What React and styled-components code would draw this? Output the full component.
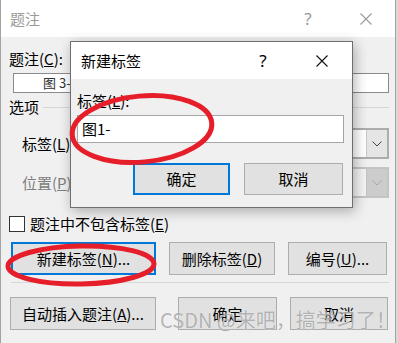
import React from "react";
import styled, { createGlobalStyle, css } from "styled-components";

const GlobalStyle = createGlobalStyle`
  html, body {
    margin: 0;
    padding: 0;
  }
  body {
    width: 398px;
    height: 343px;
    overflow: hidden;
    background: #d9d9d9;
    font-family: "Noto Sans CJK SC", "Noto Sans", sans-serif;
    color: #000;
  }
`

const Page = styled.div`
    position: relative;
    width: 398px;
    height: 343px;
    overflow: hidden;
`

// OUTER WINDOW
// ************

const Window = styled.div`
    width: 396px;
    height: 350px;
    box-sizing: border-box;
    background: #f0f0f0;
    border-left: 1px solid #a3a3a3;
    border-right: 1px solid #a3a3a3;
    display: flex;
    flex-direction: column;
`

const TitleBar = styled.div`
    height: ${p => p.$h}px;
    flex: none;
    background: #ffffff;
    display: flex;
    align-items: center;
`

const TitleText = styled.div`
    flex: 1;
    padding-left: ${p => p.$pl}px;
    font-size: 15px;
    line-height: 20px;
    color: ${p => p.$inactive ? "#9a9a9a" : "#000"};
`

const TitleControl = styled.div`
    width: ${p => p.$w}px;
    height: 100%;
    display: flex;
    align-items: center;
    justify-content: center;
    font-family: "Noto Sans", sans-serif;
    font-size: 17px;
    color: ${p => p.$inactive ? "#9a9a9a" : "#000"};
`

const CloseGlyph = ({color}) => (
    <svg width="12" height="12" viewBox="0 0 12 12">
        <path d="M0.5 0.5 L11.5 11.5 M11.5 0.5 L0.5 11.5" stroke={color} strokeWidth="1.1" fill="none"/>
    </svg>
)

const Body = styled.div`
    padding: 0 6px 0 8px;
    display: flex;
    flex-direction: column;
    font-size: 15px;
`

const FieldLabel = styled.div`
    line-height: 20px;
    height: 20px;
    margin-top: ${p => p.$mt || 0}px;
    color: ${p => p.$disabled ? "#7d7d7d" : "#000"};
`

const CaptionBox = styled.div`
    margin: 4px 0 0 4px;
    height: 20px;
    box-sizing: border-box;
    border: 1px solid #8a8a8a;
    background: #fff;
    padding-left: 29px;
    font-size: 13px;
    line-height: 18px;
    color: #333;
`

const GroupHeader = styled.div`
    margin-top: 4px;
    height: 20px;
    line-height: 20px;
    display: flex;
    align-items: center;
`

const Rule = styled.div`
    flex: 1;
    height: 1px;
    margin-left: 4px;
    background: #d7d7d7;
`

const OptionRow = styled.div`
    margin-top: ${p => p.$mt}px;
    height: 31px;
    padding-left: 13px;
    display: flex;
    align-items: center;
`

const OptionLabel = styled.div`
    width: 70px;
    line-height: 20px;
    color: ${p => p.$disabled ? "#7d7d7d" : "#000"};
`

const Combo = styled.div`
    flex: 1;
    height: 31px;
    box-sizing: border-box;
    border: 2px solid ${p => p.$disabled ? "#c4c4c4" : "#adadad"};
    background: ${p => p.$disabled ? "#f3f3f3" : "#fff"};
    display: flex;
    justify-content: flex-end;
`

const ComboButton = styled.div`
    width: 20px;
    height: 100%;
    border-left: 1px solid ${p => p.$disabled ? "#c4c4c4" : "#c9c9c9"};
    background: ${p => p.$disabled ? "#cccccc" : "#e5e5e5"};
    display: flex;
    align-items: center;
    justify-content: center;
`

const Chevron = ({color}) => (
    <svg width="10" height="6" viewBox="0 0 10 6">
        <path d="M0.5 0.5 L5 5 L9.5 0.5" stroke={color} strokeWidth="1" fill="none"/>
    </svg>
)

const CheckRow = styled.div`
    margin-top: 16px;
    height: 20px;
    display: flex;
    align-items: center;
    gap: 5px;
    line-height: 20px;
`

const CheckBox = styled.div`
    width: 16px;
    height: 16px;
    box-sizing: border-box;
    border: 1px solid #333;
    background: #fff;
`

const ButtonRow = styled.div`
    margin-top: ${p => p.$mt}px;
    padding: ${p => p.$pad || "0"};
    display: flex;
    gap: ${p => p.$gap || 13}px;
    justify-content: ${p => p.$justify || "flex-start"};
`

const Button = styled.div`
    width: ${p => p.$w}px;
    height: ${p => p.$h || 33}px;
    margin-right: ${p => p.$mr || 0}px;
    box-sizing: border-box;
    background: #e1e1e1;
    border: 1px solid #adadad;
    display: flex;
    align-items: center;
    justify-content: center;
    font-size: 15px;
    line-height: 20px;
    ${p => p.$primary && css`
        border: 2px solid #0078d7;
    `}
`

const Separator = styled.div`
    margin: 7px 0 0 2px;
    height: 1px;
    background: #d7d7d7;
`

// NEW LABEL DIALOG
// ****************

const Dialog = styled.div`
    position: absolute;
    left: 70px;
    top: 41px;
    width: 283px;
    height: 167px;
    box-sizing: border-box;
    border: 1px solid #6f6f6f;
    background: #f0f0f0;
    box-shadow: 2px 3px 12px rgba(0, 0, 0, 0.3);
    display: flex;
    flex-direction: column;
`

const DialogBody = styled.div`
    padding: 0 8px 0 6px;
    display: flex;
    flex-direction: column;
    font-size: 15px;
`

const TextInput = styled.div`
    margin-top: 4px;
    height: 28px;
    box-sizing: border-box;
    border: 1px solid #a5a5a5;
    background: #fff;
    padding-left: 4px;
    line-height: 26px;
    font-size: 15px;
`

// OVERLAYS
// ********

const Marks = styled.svg`
    position: absolute;
    left: 0;
    top: 0;
    pointer-events: none;
`

const Watermark = styled.div`
    position: absolute;
    left: 160px;
    top: 308px;
    font-size: 20px;
    line-height: 24px;
    color: rgba(130, 130, 130, 0.6);
    text-shadow: 0 0 1px rgba(255, 255, 255, 0.9);
    white-space: nowrap;
    pointer-events: none;
`

export default function App() {
    return (
        <Page>
            <GlobalStyle/>
            <Window>
                <TitleBar $h={37}>
                    <TitleText $pl={9} $inactive>题注</TitleText>
                    <TitleControl $w={58} $inactive>?</TitleControl>
                    <TitleControl $w={58} $inactive><CloseGlyph color="#9a9a9a"/></TitleControl>
                </TitleBar>
                <Body>
                    <FieldLabel $mt={12}>题注(<u>C</u>):</FieldLabel>
                    <CaptionBox>图 3-1</CaptionBox>
                    <GroupHeader>选项<Rule/></GroupHeader>
                    <OptionRow $mt={11}>
                        <OptionLabel>标签(<u>L</u>):</OptionLabel>
                        <Combo>
                            <ComboButton><Chevron color="#444"/></ComboButton>
                        </Combo>
                    </OptionRow>
                    <OptionRow $mt={8}>
                        <OptionLabel $disabled>位置(<u>P</u>):</OptionLabel>
                        <Combo $disabled>
                            <ComboButton $disabled><Chevron color="#a8a8a8"/></ComboButton>
                        </Combo>
                    </OptionRow>
                    <CheckRow>
                        <CheckBox/>
                        <span>题注中不包含标签(<u>E</u>)</span>
                    </CheckRow>
                    <ButtonRow $mt={8} $pad="0 2px 0 2px" $justify="space-between">
                        <Button $w={145} $primary>新建标签(<u>N</u>)...</Button>
                        <Button $w={106}>删除标签(<u>D</u>)</Button>
                        <Button $w={99}>编号(<u>U</u>)...</Button>
                    </ButtonRow>
                    <Separator/>
                    <ButtonRow $mt={14} $pad="0 0 0 1px">
                        <Button $w={146} $mr={9}>自动插入题注(<u>A</u>)...</Button>
                        <Button $w={99}>确定</Button>
                        <Button $w={98}>取消</Button>
                    </ButtonRow>
                </Body>
            </Window>

            <Dialog>
                <TitleBar $h={37}>
                    <TitleText $pl={10}>新建标签</TitleText>
                    <TitleControl $w={58}>?</TitleControl>
                    <TitleControl $w={60}><CloseGlyph color="#111"/></TitleControl>
                </TitleBar>
                <DialogBody>
                    <FieldLabel $mt={12}>标签(<u>L</u>):</FieldLabel>
                    <TextInput>图1-</TextInput>
                    <ButtonRow $mt={20} $gap={14} $justify="flex-end" $pad="0 1px 0 0">
                        <Button $w={97} $h={32} $primary>确定</Button>
                        <Button $w={99} $h={32}>取消</Button>
                    </ButtonRow>
                </DialogBody>
            </Dialog>

            <Marks width="398" height="343" viewBox="0 0 398 343">
                <ellipse cx="142" cy="129" rx="70" ry="33" transform="rotate(-5 142 129)"
                         fill="none" stroke="#e61e2a" strokeWidth="5"/>
                <ellipse cx="81" cy="265" rx="73" ry="19" transform="rotate(-1 81 265)"
                         fill="none" stroke="#e61e2a" strokeWidth="5"/>
            </Marks>

            <Watermark>CSDN @来吧，搞学习了！</Watermark>
        </Page>
    );
}
